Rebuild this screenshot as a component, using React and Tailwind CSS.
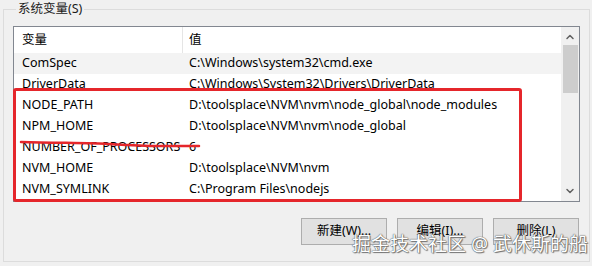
import { ChevronUp, ChevronDown } from 'lucide-react';

const rows = [
  { name: 'ComSpec', value: 'C:\\Windows\\system32\\cmd.exe', hl: true },
  { name: 'DriverData', value: 'C:\\Windows\\System32\\Drivers\\DriverData' },
  { name: 'NODE_PATH', value: 'D:\\toolsplace\\NVM\\nvm\\node_global\\node_modules' },
  { name: 'NPM_HOME', value: 'D:\\toolsplace\\NVM\\nvm\\node_global' },
  { name: 'NUMBER_OF_PROCESSORS', value: '6' },
  { name: 'NVM_HOME', value: 'D:\\toolsplace\\NVM\\nvm' },
  { name: 'NVM_SYMLINK', value: 'C:\\Program Files\\nodejs' },
];

const font = { fontFamily: '"Noto Sans", "Noto Sans CJK SC", sans-serif' };

const App = () => {
  return (
    <div
      className="relative w-[592px] h-[266px] overflow-hidden bg-[#f0f0f0] text-[12.5px] text-black"
      style={font}
    >
      <fieldset className="ml-[3px] mr-[4px] h-[262px] border border-[#dcdcdc] px-[9px] pb-0">
        <legend className="ml-[3px] px-[2px] leading-[18px] text-[#1a1a1a]">系统变量(S)</legend>

        <div className="mt-[8px] flex h-[176px] w-[567px] border border-[#828790] bg-white">
          <div className="flex-1 overflow-hidden">
            <div className="flex h-[26px] items-center">
              <div className="w-[169px] pl-[8px] border-r border-[#e5e5e5] h-full flex items-center">变量</div>
              <div className="pl-[6px]">值</div>
            </div>
            {rows.map((r) => (
              <div
                key={r.name}
                className={`flex h-[21px] items-center whitespace-nowrap ${r.hl ? 'bg-[#f3f3f3]' : ''}`}
              >
                <div className="w-[175px] shrink-0 pl-[8px]">{r.name}</div>
                <div>{r.value}</div>
              </div>
            ))}
          </div>

          <div className="flex w-[18px] flex-col items-center bg-[#f0f0f0]">
            <ChevronUp className="mt-[4px] h-[12px] w-[12px] text-[#606060]" strokeWidth={3} />
            <div className="mt-[2px] h-[48px] w-[15px] bg-[#cdcdcd]" />
            <div className="flex-1" />
            <ChevronDown className="mb-[4px] h-[12px] w-[12px] text-[#606060]" strokeWidth={3} />
          </div>
        </div>

        <div className="mt-[16px] flex justify-end gap-[10px] pr-[1px]">
          {['新建(W)...', '编辑(I)...', '删除(L)'].map((b) => (
            <button
              key={b}
              className="h-[27px] w-[86px] border border-[#adadad] bg-[#e1e1e1] text-[12.5px] text-black"
            >
              {b}
            </button>
          ))}
        </div>
      </fieldset>

      {/* red highlight box */}
      <div className="absolute left-[13px] top-[88px] h-[114px] w-[509px] rounded-[3px] border-[3px] border-[#e5262b]" />

      {/* hand-drawn strike */}
      <svg className="absolute left-0 top-0" width="592" height="266" viewBox="0 0 592 266">
        <path
          d="M21 142 C 60 143, 95 143, 108 144 C 125 145, 140 146, 160 146 C 175 146, 188 146, 199 146"
          fill="none"
          stroke="#e5262b"
          strokeWidth="2.5"
          strokeLinecap="round"
        />
      </svg>

      {/* watermark */}
      <div className="absolute left-[352px] top-[231px] text-[19px] leading-[26px] whitespace-nowrap text-white [text-shadow:0_0_1px_#555,0_0_1px_#555,1px_1px_1px_#777]">
        掘金技术社区 @ 武休斯的船
      </div>
    </div>
  );
};

export default App;
